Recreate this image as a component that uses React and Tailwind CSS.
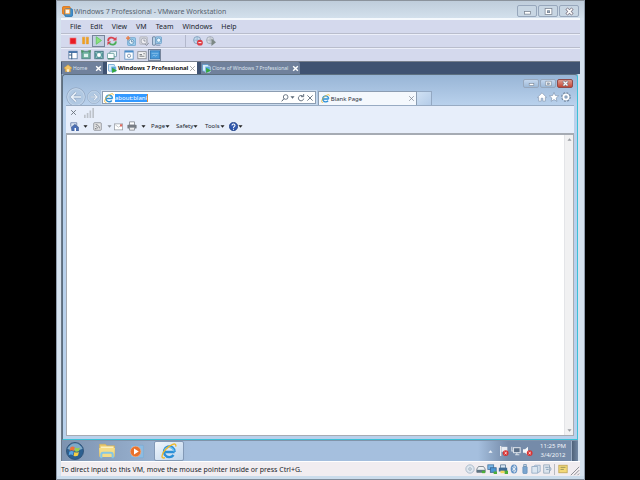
import clsx from 'clsx';

const MENU = ['File', 'Edit', 'View', 'VM', 'Team', 'Windows', 'Help'];

function Icon({ size = 10, className, children }) {
  return (
    <svg width={size} height={size} viewBox="0 0 12 12" fill="none" className={clsx('shrink-0', className)} aria-hidden="true">
      {children}
    </svg>
  );
}

function Cross({ size = 7, color = '#ffffff', width = 2 }) {
  return (
    <Icon size={size}>
      <path d="M2 2l8 8M10 2l-8 8" stroke={color} strokeWidth={width} />
    </Icon>
  );
}

function Caret({ color = '#222222' }) {
  return (
    <Icon size={5}>
      <path d="M1 3h10L6 9z" fill={color} />
    </Icon>
  );
}

function IeLogo({ size = 10 }) {
  return (
    <Icon size={size}>
      <path d="M10.200 6.700H3.200M10.200 6.700A4 4 0 1 0 9.400 9" stroke="#2b8fd6" strokeWidth="1.800" />
      <path d="M9.800 6.300A4 4 0 0 0 2.600 5" stroke="#6cc4f2" strokeWidth="0.900" />
      <path d="M3 11C1.500 11.600.5 11 .8 9.500 1.300 6.500 5 2.500 8.800 1c1.700-.6 2.700 0 2.200 1.700" stroke="#f0b92a" strokeWidth="1" />
    </Icon>
  );
}

function VmIcon() {
  return (
    <Icon size={9}>
      <rect x="0.500" y="0.500" width="8" height="9" rx="1" fill="#d9ecfa" stroke="#4b8fc8" />
      <rect x="4" y="3" width="7" height="8" rx="1" fill="#5aa7dc" stroke="#e9f5fd" strokeWidth="0.800" />
      <path d="M5.500 5l6.500 3.500L5.500 12z" fill="#35a83c" />
    </Icon>
  );
}

function Gear({ size = 10 }) {
  return (
    <Icon size={size}>
      <circle cx="6" cy="6" r="4.500" stroke="#71869f" strokeWidth="2.600" strokeDasharray="2 1.530" />
      <circle cx="6" cy="6" r="4" stroke="#71869f" strokeWidth="1" />
      <circle cx="6" cy="6" r="3.200" fill="#8fa6c0" stroke="#ffffff" strokeWidth="2.200" />
    </Icon>
  );
}

function ToolButton({ label, pressed, children }) {
  return (
    <button
      type="button"
      aria-label={label}
      className={clsx(
        'flex h-[12px] w-[13px] shrink-0 items-center justify-center',
        pressed && 'border border-[#77859c] bg-[#c3cfe2]',
      )}
    >
      {children}
    </button>
  );
}

function Separator() {
  return <span className="h-[12px] w-px shrink-0 bg-[#b3b8cc]" />;
}

function CaptionButton({ label, kind, small, danger }) {
  return (
    <button
      type="button"
      aria-label={label}
      className={clsx(
        'flex items-center justify-center rounded-[2px] border',
        small ? 'h-[9px] w-[16px]' : 'h-[12px] w-[20px]',
        danger ? 'border-[#8f4a4a] bg-linear-to-b from-[#dc9a90] to-[#c54433]' : 'border-[#97a7bc]',
        !danger && (small ? 'bg-linear-to-b from-[#c5d8ee] to-[#9db9d8]' : 'bg-[#c8d6e3]'),
      )}
    >
      <Icon size={small ? 7 : 9}>
        {kind === 'min' && <rect x="2" y="6" width="8" height="3.500" fill="#fff" stroke="#77818f" />}
        {kind === 'max' && (
          <>
            <rect x="1.500" y="2" width="9" height="8" fill="#fff" stroke="#77818f" />
            <rect x="4.500" y="5" width="3" height="2.500" fill="#9ab0c8" stroke="#77818f" />
          </>
        )}
        {kind === 'close' && (
          <>
            <path d="M2 2l8 8M10 2l-8 8" stroke="#77717f" strokeWidth="4.200" />
            <path d="M2.600 2.600l6.800 6.800M9.400 2.600l-6.800 6.800" stroke="#fff" strokeWidth="2.200" />
          </>
        )}
      </Icon>
    </button>
  );
}

function TitleBar() {
  return (
    <header className="flex h-[18px] shrink-0 items-center border-t border-[#8b939c] bg-linear-to-b from-[#bfcddb] to-[#d3e0ec] px-[5px]">
      <Icon size={11} className="mt-[4px]">
        <rect x="0.500" y="0.500" width="8.500" height="8.500" rx="1.500" fill="#f08a24" stroke="#d9761f" />
        <rect x="3" y="3" width="8.500" height="8.500" rx="1.500" fill="#3e8fcc" stroke="#3478b4" />
        <rect x="3" y="3" width="6" height="6" fill="#f39a3c" />
        <rect x="4" y="4" width="4" height="4" fill="#fff6e8" />
      </Icon>
      <h1 className="ml-px mt-[4px] flex-1 whitespace-nowrap text-[7px] leading-[10px] text-[#56626f]">
        Windows 7 Professional - VMware Workstation
      </h1>
      <div className="mt-[3px] flex gap-px">
        <CaptionButton label="Minimize" kind="min" />
        <CaptionButton label="Maximize" kind="max" />
        <CaptionButton label="Close" kind="close" />
      </div>
    </header>
  );
}

function MainToolbar() {
  return (
    <div className="flex h-[14px] items-center border-t border-[#b9bdcc] pl-[5px] shadow-[inset_0_1px_0_#eceffa]">
      <ToolButton label="Power off">
        <Icon size={8}><rect x="1.500" y="1.500" width="9" height="9" fill="#e81c24" stroke="#f4777b" /></Icon>
      </ToolButton>
      <ToolButton label="Suspend">
        <Icon size={9}><path d="M2 1.500h3v9H2zM7 1.500h3v9H7z" fill="#f0a01e" stroke="#e59a2c" strokeWidth="0.600" /></Icon>
      </ToolButton>
      <ToolButton label="Power on" pressed>
        <Icon size={9}><path d="M3 1l7 5-7 5z" fill="#8be07c" stroke="#5cc45c" /></Icon>
      </ToolButton>
      <ToolButton label="Reset">
        <Icon>
          <path d="M1.500 6C1 2 7 0 10 4.500" stroke="#d94450" strokeWidth="2.200" />
          <path d="M7 5.500h4.500V1z" fill="#d94450" />
          <path d="M10.500 6.500C11 10.500 5 12 2.500 8" stroke="#4bad58" strokeWidth="2.200" />
          <path d="M5 6.500H.5V11z" fill="#d94450" />
        </Icon>
      </ToolButton>
      <div className="ml-[6px] mr-[22px] flex">
        <ToolButton label="Take snapshot">
          <Icon>
            <rect x="2" y="2" width="9.500" height="9.500" rx="1" fill="#9bcbec" stroke="#6ba3cc" />
            <circle cx="6.500" cy="7" r="3" fill="#eef8ff" stroke="#5c93bb" />
            <path d="M6.500 5v2h2" stroke="#4d7699" />
            <path d="M2.500 0v5M0 2.500h5" stroke="#ee7a3e" strokeWidth="1.500" />
          </Icon>
        </ToolButton>
        <ToolButton label="Revert to snapshot">
          <Icon>
            <rect x="1" y="1" width="9" height="9" rx="1" fill="#d2d4da" stroke="#b3b6c0" />
            <circle cx="6" cy="6" r="3.500" fill="#eeeef2" stroke="#a2a6b2" />
            <path d="M6 4v2h2M7 9.500l2 2 3-3.500" stroke="#8f94a1" strokeWidth="1.200" />
          </Icon>
        </ToolButton>
        <ToolButton label="Snapshot manager">
          <Icon>
            <rect x="0.500" y="1" width="4" height="10" rx="1" fill="#bcd2e6" stroke="#5d7590" />
            <rect x="4.500" y="1" width="7" height="8" rx="1" fill="#a8d0ec" stroke="#6b9fc8" />
            <circle cx="8" cy="5" r="2.500" fill="#e9f6ff" stroke="#5f96be" />
            <path d="M5 11h5" stroke="#5d7c9b" />
          </Icon>
        </ToolButton>
      </div>
      <Separator />
      <div className="ml-[5px] flex">
        <ToolButton label="Record">
          <Icon>
            <circle cx="5" cy="5" r="4.300" fill="#c7dcee" stroke="#7c9ab8" />
            <path d="M5 1v8M1 5h8" stroke="#8fadc9" />
            <circle cx="8.300" cy="8" r="3.500" fill="#de3a42" />
            <path d="M6.500 8h3.600" stroke="#fff" strokeWidth="1.200" />
          </Icon>
        </ToolButton>
        <ToolButton label="Replay">
          <Icon>
            <circle cx="5" cy="5" r="4.300" fill="#d9dde4" stroke="#9aa4b2" />
            <path d="M5 1v8M1 5h8" stroke="#a8b1be" />
            <path d="M6.500 3l5.500 4.500L6.500 12z" fill="#7c8885" />
          </Icon>
        </ToolButton>
      </div>
    </div>
  );
}

function ViewToolbar() {
  return (
    <div className="flex h-[14px] items-center border-t border-[#b9bdcc] pl-[5px] shadow-[inset_0_1px_0_#eceffa]">
      <ToolButton label="Sidebar">
        <Icon><rect x="1" y="1.500" width="10" height="9" fill="#fff" stroke="#5c7fa6" /><path d="M1 2.500h10" stroke="#3a6ba5" strokeWidth="2" /><path d="M4.500 3v8M1 6h3" stroke="#3c6188" strokeWidth="1.300" /></Icon>
      </ToolButton>
      <ToolButton label="Quick switch">
        <Icon>
          <rect x="1" y="1.500" width="10" height="9" fill="#6cb09c" stroke="#527f85" />
          <rect x="3.500" y="4.500" width="5" height="4" fill="#dff1ee" />
          <path d="M0 0l4 1-3 3zM12 0l-4 1 3 3z" fill="#4b9660" />
        </Icon>
      </ToolButton>
      <ToolButton label="Full screen">
        <Icon>
          <rect x="1" y="1.500" width="10" height="9" fill="#5a9ba0" stroke="#437480" />
          <circle cx="6" cy="6" r="2.300" fill="#fff" />
          <path d="M2 2.500l2 2M10 2.500l-2 2M2 9.500l2-2M10 9.500l-2-2" stroke="#c9eadd" />
        </Icon>
      </ToolButton>
      <ToolButton label="Unity">
        <Icon>
          <rect x="3.500" y="1.500" width="8" height="6.500" rx="1" fill="#eef8fb" stroke="#5c8a9c" />
          <rect x="0.500" y="4" width="8" height="6.500" rx="1" fill="#f8fdff" stroke="#5a9892" />
          <path d="M1 10.500h8" stroke="#4f8b79" strokeWidth="1.600" />
        </Icon>
      </ToolButton>
      <div className="mx-px flex"><Separator /></div>
      <span className="w-px" />
      <ToolButton label="Summary view">
        <Icon><rect x="1" y="1" width="10" height="10" fill="#fff" stroke="#5a90c2" /><path d="M1 2h10" stroke="#4a8dca" strokeWidth="2" /><circle cx="6" cy="7" r="2" stroke="#7d94ab" /></Icon>
      </ToolButton>
      <ToolButton label="Appliance view">
        <Icon><rect x="1" y="2" width="10" height="8.500" fill="#f4f4f4" stroke="#85898e" /><path d="M3 5.500h3M3 7.500h6M7.500 4.500h2" stroke="#83878b" strokeWidth="1.300" /></Icon>
      </ToolButton>
      <ToolButton label="Console view" pressed>
        <Icon><rect x="0.500" y="1" width="11" height="9.500" fill="#4999d8" stroke="#2f78b8" /><path d="M2 4h8M3 7.500l2-1.500 1 1.500 3-1.500" stroke="#8cc3ec" /></Icon>
      </ToolButton>
    </div>
  );
}

function TabStrip() {
  const idle = 'flex h-[12px] items-center bg-[#70819c] text-[#dde4ef]';
  return (
    <nav className="flex h-[13px] shrink-0 items-end gap-[4px] border-t border-[#777f8c] bg-[#3f5271] pl-px text-[5px] leading-[10px] whitespace-nowrap">
      <div className={clsx(idle, 'w-[41px] pl-[2px] pr-px')}>
        <Icon size={8}><path d="M0 6l6-5 6 5-1 1H10v4.500H2V7H1z" fill="#f3c464" stroke="#ca9233" strokeWidth="0.700" /><path d="M5 8h2v4H5z" fill="#fff" /></Icon>
        <button type="button" className="ml-px flex-1 text-left">Home</button>
        <button type="button" aria-label="Close Home"><Cross width={2.5} /></button>
      </div>
      <div className="flex h-[12px] w-[90px] items-center bg-white pl-px pr-px text-[6px] font-bold text-[#151515]">
        <VmIcon />
        <button type="button" className="ml-px flex-1 text-left">Windows 7 Professional</button>
        <button type="button" aria-label="Close Windows 7 Professional"><Cross color="#9a9a9a" width={1.500} /></button>
      </div>
      <div className={clsx(idle, 'w-[99px] rounded-tr-[2px] pl-px pr-px')}>
        <VmIcon />
        <button type="button" className="ml-px flex-1 text-left">Clone of Windows 7 Professional</button>
        <button type="button" aria-label="Close clone"><Cross width={2.5} /></button>
      </div>
    </nav>
  );
}

function NavCircle({ label, big, flip }) {
  return (
    <button type="button" aria-label={label} className="shrink-0">
      <Icon size={big ? 20 : 14}>
        <circle cx="6" cy="6" r="5.500" fill="#b0c8e2" stroke="#8b9fb9" strokeWidth="0.500" />
        <circle cx="6" cy="6" r="5" stroke="#c9daec" strokeWidth="0.500" />
        <path d={flip ? 'M3 6h5.500M6 3.300L8.700 6 6 8.700' : 'M9 6H3.500M6 3.300L3.300 6 6 8.700'} stroke="#93a8c3" strokeWidth="1.700" />
        <path d={flip ? 'M3 6h5.500M6 3.300L8.700 6 6 8.700' : 'M9 6H3.500M6 3.300L3.300 6 6 8.700'} stroke="#e9f1f9" strokeWidth="1" />
      </Icon>
    </button>
  );
}

function BrowserTop() {
  return (
    <div className="shrink-0">
      <div className="flex h-[16px] items-start justify-end gap-px pr-px pt-[4px]">
        <CaptionButton small label="Minimize browser" kind="min" />
        <CaptionButton small label="Maximize browser" kind="max" />
        <CaptionButton small danger label="Close browser" kind="close" />
      </div>
      <div className="flex h-[14px] items-end">
        <div className="-mb-[2px] flex h-[20px] w-[36px] shrink-0 items-center gap-px self-end">
          <NavCircle big label="Back" />
          <NavCircle flip label="Forward" />
        </div>
        <div className="mb-px flex h-[13px] min-w-0 flex-[215] items-center border border-[#8c9db2] bg-white pl-px pr-px shadow-[0_0_0_1px_#c9daed]">
          <IeLogo />
          <div className="ml-px min-w-0 flex-1">
            <input
              aria-label="Address"
              defaultValue="about:blank"
              size={1}
              className="block h-[8px] w-[33px] border-r border-[#d88c43] bg-[#3399ff] p-0 text-[6px] leading-[8px] text-white outline-none"
            />
          </div>
          <div className="flex items-center gap-px">
            <button type="button" aria-label="Search"><Icon size={8}><circle cx="7" cy="4.500" r="3.500" stroke="#5b6877" strokeWidth="1.300" /><path d="M4.500 7L1 11" stroke="#5b6877" strokeWidth="1.500" /></Icon></button>
            <button type="button" aria-label="Search options"><Caret color="#5b6877" /></button>
            <button type="button" aria-label="Refresh" className="ml-px"><Icon size={8}><path d="M9 3.500A4 4 0 1 0 10 7M6 4h4V0" stroke="#5b6877" strokeWidth="1.400" /></Icon></button>
            <button type="button" aria-label="Stop"><Cross size={8} color="#5b6877" width={1.300} /></button>
          </div>
        </div>
        <div className="ml-[2px] flex h-[14px] min-w-0 flex-[97] items-center border border-b-0 border-[#8c9db2] bg-[#f4f8fd] pl-[2px] pr-px">
          <IeLogo size={9} />
          <button type="button" className="ml-px flex-1 whitespace-nowrap text-left text-[6px] leading-[10px] text-[#292f3c]">Blank Page</button>
          <button type="button" aria-label="Close tab"><Cross color="#77808c" width={1.200} /></button>
        </div>
        <button type="button" aria-label="New tab" className="h-[14px] w-[15px] border border-b-0 border-l-0 border-[#93a8c2] bg-linear-to-br from-[#d0e1f3] to-[#b4cce8]" />
        <div className="flex min-w-0 flex-[142] items-center justify-end gap-[2px] pb-[3px] pr-[3px]">
          <button type="button" aria-label="Home page"><Icon><path d="M0.500 6.500L6 1l5.500 5.500H10V11H7V7.500H5V11H2V6.500z" fill="#fff" stroke="#8296b0" strokeWidth="0.800" /></Icon></button>
          <button type="button" aria-label="Favorites"><Icon><path d="M6 .5l1.600 3.700 4 .3-3 2.700.9 4L6 9.100l-3.500 2.100.9-4-3-2.700 4-.3z" fill="#fff" stroke="#8296b0" strokeWidth="0.800" /></Icon></button>
          <button type="button" aria-label="Settings"><Gear /></button>
        </div>
      </div>
    </div>
  );
}

function CommandBar() {
  return (
    <div className="shrink-0 border-t border-[#98abc3] bg-[#e7eefa]">
      <div className="flex h-[13px] items-center gap-[7px] pl-[4px]">
        <button type="button" aria-label="Close toolbar"><Cross color="#666e78" width={1.500} /></button>
        <Icon size={10}><path d="M0 8h2v4H0zM3.300 6h2v6h-2zM6.600 3h2v9h-2zM10 0h2v12h-2z" fill="#bdc2c9" /></Icon>
      </div>
      <div className="flex h-[14px] items-center whitespace-nowrap pl-[4px] text-[6px] leading-[10px] text-[#202630]">
        <button type="button" aria-label="Home menu" className="flex items-center gap-[4px]">
          <Icon size={9}><path d="M1 6V1h8v4" fill="#dce7f4" stroke="#5d73a0" /><path d="M1.500 7L6.500 3l5 4v5h-9z" fill="#4a6eb4" stroke="#435a84" strokeWidth="0.700" /><path d="M6 8h2v4H6z" fill="#fff" /></Icon>
          <Caret />
        </button>
        <button type="button" aria-label="Feeds" className="ml-[5px] flex items-center gap-[5px]">
          <Icon size={9}><rect x="1" y="1" width="10" height="10" rx="1" fill="#e8e8e8" stroke="#7c7f85" /><path d="M3.500 3.500c3 0 5 2 5 5M3.500 6c1.600 0 2.500 1 2.500 2.500" stroke="#73767c" strokeWidth="1.200" /><path d="M3 8h1.500v1.500H3z" fill="#66696f" /></Icon>
          <Caret color="#888d94" />
        </button>
        <button type="button" aria-label="Read mail" className="ml-[2px]">
          <Icon size={9}><rect x="0.500" y="2.500" width="11" height="8" fill="#fff" stroke="#959aa2" /><path d="M1.500 3.500L6 7l4.500-3.500" stroke="#b6bac0" /><path d="M8 3h3v3H8z" fill="#df6b62" /></Icon>
        </button>
        <button type="button" aria-label="Print" className="ml-[4px] flex items-center gap-[4px]">
          <Icon><path d="M3 1h6v4H3z" fill="#fff" stroke="#858a91" /><rect x="0.500" y="4.500" width="11" height="4.500" rx="1" fill="#777c83" /><path d="M3 7.500h6v3.500H3z" fill="#eee" stroke="#858a91" /></Icon>
          <Caret />
        </button>
        <button type="button" className="ml-[5px] flex w-[25px] items-center">Page<Caret /></button>
        <button type="button" className="flex w-[29px] items-center">Safety<Caret /></button>
        <button type="button" className="flex w-[24px] items-center">Tools<Caret /></button>
        <button type="button" aria-label="Help" className="flex items-center">
          <Icon size={9}><circle cx="6" cy="6" r="5.500" fill="#3159ae" stroke="#203f80" /><path d="M4 4.500C4 2 8 2 8 4.500 8 6 6 6 6 8M6 9v1.300" stroke="#fff" strokeWidth="1.400" /></Icon>
          <Caret />
        </button>
      </div>
    </div>
  );
}

function Browser() {
  return (
    <section className="flex min-h-0 flex-1 flex-col rounded-t-[3px] border border-[#5c6f80] border-r-[#3cc0d8] border-b-[#3cc0d8] bg-linear-to-b from-[#98b5d6] to-[#b9d1ec] to-[30px] px-[3px] pb-[3px]">
      <BrowserTop />
      <CommandBar />
      <main className="flex min-h-0 flex-1 border border-t-2 border-[#a6abb3] bg-white">
        <div className="flex-1" />
        <div className="flex w-[9px] flex-col items-center justify-between border-l border-[#e4e5e8] bg-[#f1f1f2] py-[2px]">
          <button type="button" aria-label="Scroll up" className="rotate-180"><Caret color="#9a9da2" /></button>
          <button type="button" aria-label="Scroll down"><Caret color="#9a9da2" /></button>
        </div>
      </main>
    </section>
  );
}

function Taskbar() {
  return (
    <div className="flex h-[21px] shrink-0 items-center border-t border-[#8094aa] bg-linear-to-r from-[#7d93b0] via-[#a5bfde] via-25% to-[#a5bfde]">
      <button type="button" aria-label="Start" className="ml-[4px]">
        <Icon size={18}>
          <circle cx="6" cy="6" r="5.700" fill="#2c6090" stroke="#2a4c70" strokeWidth="0.500" />
          <path d="M.9 4.500C3-.500 9-.500 11.100 4.500 8 6 4 6 .9 4.500z" fill="#7fa9c8" />
          <path d="M3 3.500c1-.7 2-.6 2.800 0L5.300 6c-1-.6-2-.6-2.900 0z" fill="#ee7138" />
          <path d="M6.200 3.700c1 .6 2 .5 3 0L8.700 6c-1 .6-2 .6-3 .2z" fill="#97cf4d" />
          <path d="M2.300 6.400c1-.6 2-.5 2.900 0l-.6 2.400c-.8-.6-1.800-.6-2.800 0z" fill="#58a7e6" />
          <path d="M5.600 6.700c1 .5 2 .5 3 0L8 9c-1 .6-2 .6-3 .1z" fill="#f8cf42" />
        </Icon>
      </button>
      <button type="button" aria-label="Windows Explorer" className="ml-[14px]">
        <Icon size={18}>
          <path d="M1 1.500h4l1 1h5v7H1z" fill="#e9c869" stroke="#d0b05c" strokeWidth="0.400" />
          <path d="M1.800 3h8.500V9H1.800z" fill="#fbf1be" />
          <path d="M.7 4h10.600l-.5 6H1.200z" fill="#f5dc86" />
          <path d="M2.200 10.800V8.500c0-1 .5-1.300 1.200-1.300h5.200c.7 0 1.200.3 1.200 1.300v2.300" stroke="#86c6e4" strokeWidth="1.400" />
        </Icon>
      </button>
      <button type="button" aria-label="Media Player" className="ml-[13px]">
        <Icon size={15}>
          <rect x="1.500" y="1" width="10" height="10" rx="0.500" fill="#8cbce3" stroke="#78aad4" strokeWidth="0.500" />
          <circle cx="5.300" cy="6" r="4.200" fill="#e9712c" stroke="#f6b183" strokeWidth="0.500" />
          <path d="M4 3.600L7.800 6 4 8.400z" fill="#fff" />
        </Icon>
      </button>
      <button type="button" aria-label="Internet Explorer" className="ml-[10px] flex h-[20px] w-[30px] items-center justify-center rounded-[2px] border border-[#8299b6] bg-linear-to-br from-[#f0f6fc] to-[#bdd3ea]">
        <IeLogo size={16} />
      </button>
      <div className="ml-auto flex h-full items-center bg-linear-to-r from-[#a5bfde] to-[#758ba9] to-30% pl-[10px]">
        <Icon size={5} className="rotate-180"><path d="M1 3h10L6 9z" fill="#f2f6fb" /></Icon>
        <Icon size={10} className="ml-[6px]"><path d="M2 0v12" stroke="#eee" strokeWidth="1.500" /><path d="M3 1h7v6H3z" fill="#e8ecf2" /><circle cx="8" cy="8.500" r="3.500" fill="#d93434" /><path d="M6.700 7.200l2.600 2.600M9.300 7.200L6.700 9.800" stroke="#fff" /></Icon>
        <Icon size={10} className="ml-[2px]"><rect x="3" y="2" width="8" height="6" fill="#5c7089" stroke="#d9dfe7" strokeWidth="1.300" /><path d="M1 1v5h2M5 10.500h5M7 8v2" stroke="#d9dfe7" strokeWidth="1.300" /></Icon>
        <Icon size={10} className="ml-[2px]"><path d="M0 4h2.500L6 1v10L2.500 8H0z" fill="#f5f7fa" /><circle cx="8" cy="8.500" r="3.500" fill="#d93434" /><path d="M6.700 7.200l2.600 2.600M9.300 7.200L6.700 9.800" stroke="#fff" /></Icon>
        <div className="ml-[4px] w-[32px] whitespace-nowrap text-center text-[6px] leading-[9px] text-[#f3f6fa]">
          <p>11:25 PM</p>
          <p>3/4/2012</p>
        </div>
        <button type="button" aria-label="Show desktop" className="ml-[2px] h-full w-[7px] border-l border-[#9eb0c8] bg-linear-to-r from-[#4f627a] to-[#7389a5]" />
      </div>
    </div>
  );
}

function StatusBar() {
  return (
    <footer className="flex h-[15px] shrink-0 items-center border-t border-white bg-[#f1edf0]">
      <p className="flex-1 whitespace-nowrap text-[7px] leading-[11px] text-[#20242a]">
        To direct input to this VM, move the mouse pointer inside or press Ctrl+G.
      </p>
      <div className="flex items-center gap-px">
        <Icon><circle cx="6" cy="6" r="5" fill="#dfe7ef" stroke="#a3b4c5" /><circle cx="6" cy="6" r="1.500" fill="#fff" stroke="#8fa2b5" /></Icon>
        <Icon><path d="M1 6l2-3h6l2 3v4H1z" fill="#eef2f5" stroke="#707b86" /><path d="M1 7h10v3H1z" fill="#5f7584" /><path d="M7 8h4v3H7z" fill="#4cae38" /></Icon>
        <Icon><rect x="1" y="1" width="7" height="5.500" fill="#79b8e8" stroke="#4a76a2" /><rect x="4" y="4.500" width="7" height="5.500" fill="#4b96d4" stroke="#3a6390" /><path d="M8 9h4v3H8z" fill="#4cae38" /></Icon>
        <Icon><path d="M3 1h6v4H3z" fill="#d9e7f5" stroke="#5f7b96" /><rect x="1" y="4.500" width="10" height="4.500" fill="#3f6a95" /><path d="M3 8h5v3H3z" fill="#f0d75c" /><path d="M8 8h4v4H8z" fill="#4cae38" /></Icon>
        <Icon><ellipse cx="6" cy="6" rx="4" ry="5.500" fill="#6391c4" /><path d="M3.500 4l5 4L6 10V2l2.500 2-5 4" stroke="#fff" strokeWidth="0.900" /></Icon>
        <Icon><rect x="3.500" y="3" width="5" height="8.500" rx="1" fill="#7ba5cf" stroke="#6490bb" /><path d="M4.500.5h3V3h-3z" fill="#d5e2ef" stroke="#6d8eae" /></Icon>
        <Icon><path d="M1 3h7v8H1zM3 3l2-1.500h6V9L8 10.500" fill="#dbe6f1" stroke="#93aac3" /></Icon>
        <Icon><path d="M2 1h7v10H2z" fill="#dbe4ed" stroke="#99a9bb" /><path d="M4 4h4M5 6.500h3M9 3l2 3-2 3" stroke="#7b96b2" /></Icon>
      </div>
      <span className="mx-[2px] h-[11px] w-px bg-[#b9bac0]" />
      <Icon className="ml-px"><rect x="1" y="1.500" width="10" height="9" fill="#f3d977" stroke="#c0a655" /><path d="M3 4h6M3 6.500h4" stroke="#8c8a56" /></Icon>
      <Icon size={10} className="ml-[2px] self-end"><path d="M1 11L11 1M5 11l6-6M9 11l2-2" stroke="#8f9096" strokeWidth="1.200" /></Icon>
    </footer>
  );
}

export default function App() {
  return (
    <div className="flex h-screen bg-black pl-[56px] pr-[55px] font-['Noto_Sans','Open_Sans',sans-serif]">
      <div className="flex min-w-0 flex-1 flex-col overflow-hidden border-x border-[#8f9cac] bg-[#d5e2ef]">
        <TitleBar />
        <div className="mx-[4px] flex min-h-0 flex-1 flex-col">
          <div className="shrink-0 border-t-[2px] border-[#f5f9fd] bg-[#d4d9ed]">
            <nav className="flex h-[13px] items-center gap-[9px] pl-[9px] text-[7px] leading-[11px] text-[#20242c]">
              {MENU.map((item) => (
                <button key={item} type="button">{item}</button>
              ))}
            </nav>
            <MainToolbar />
            <ViewToolbar />
          </div>
          <TabStrip />
          <div className="mr-[2px] flex min-h-0 flex-1 flex-col border-l border-[#6d7988] bg-[#a5bfde]">
            <Browser />
            <Taskbar />
          </div>
          <StatusBar />
        </div>
        <div className="h-[4px] shrink-0 border-b border-[#7f8b99] bg-[#cbdceb]" />
      </div>
    </div>
  );
}
